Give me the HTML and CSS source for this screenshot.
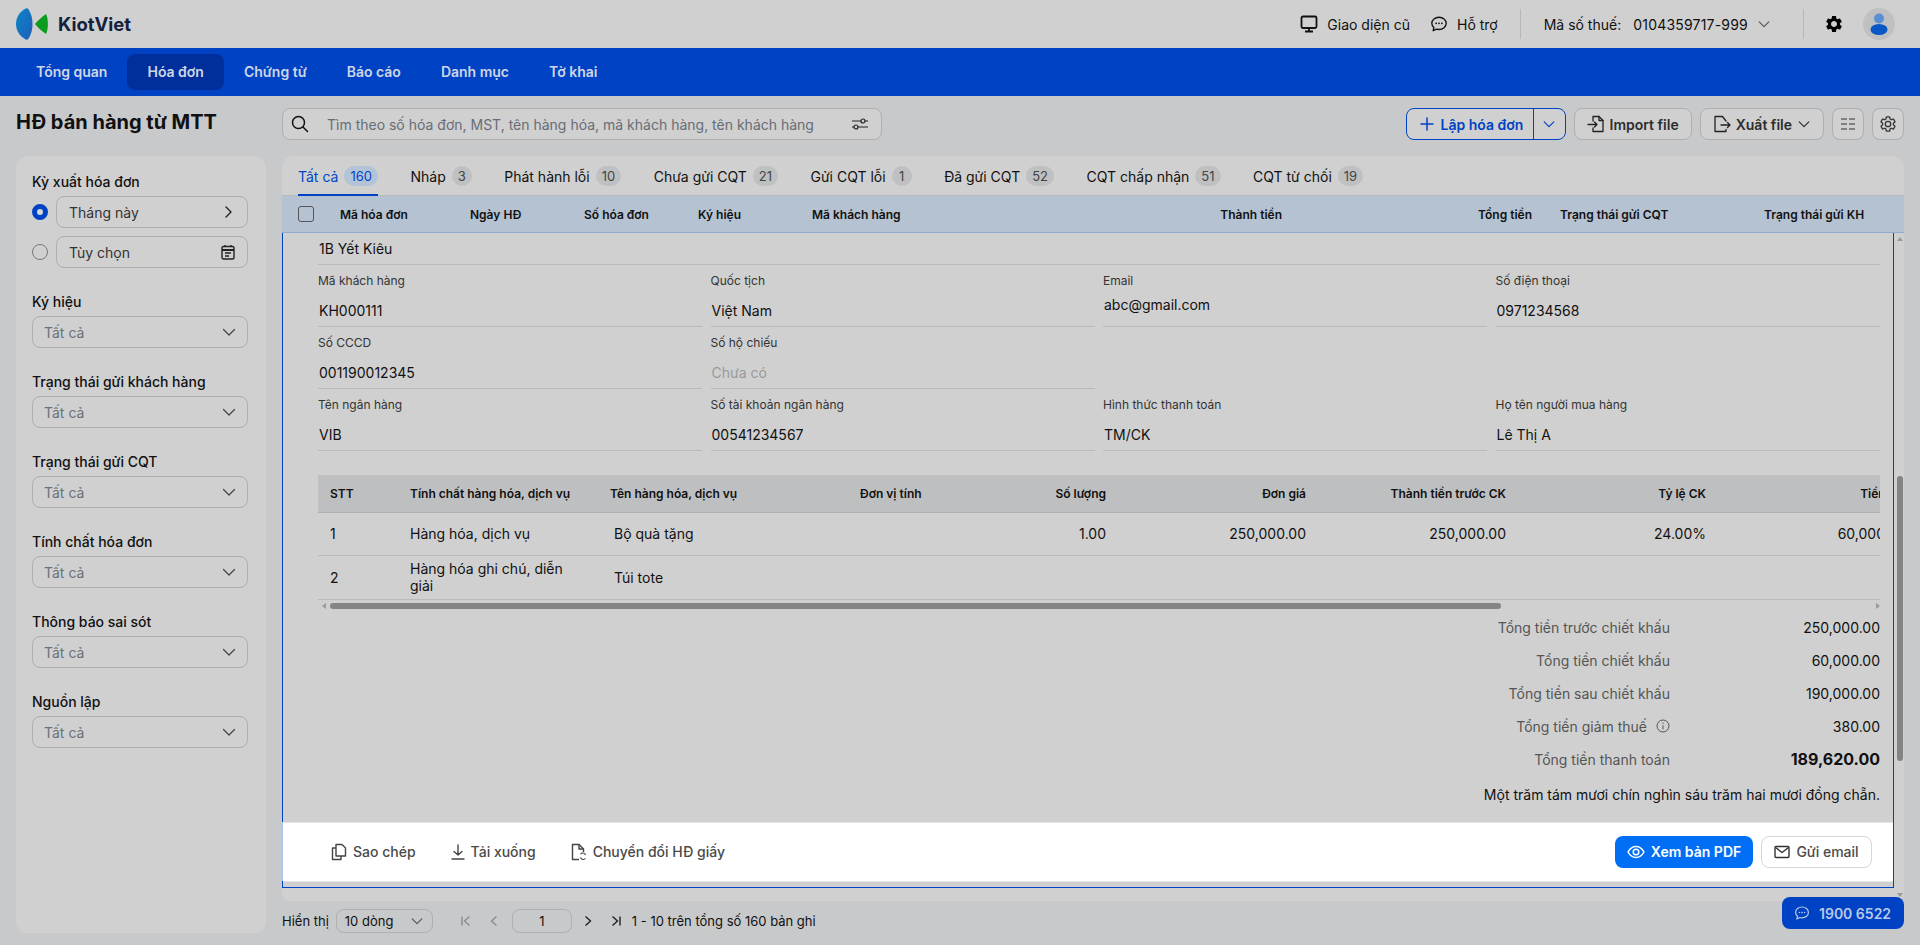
FILE: index.html
```html
<!DOCTYPE html>
<html lang="vi">
<head>
  <meta charset="UTF-8" />
  <title>HĐ bán hàng từ MTT</title>
  <link rel="stylesheet" href="styles.css">
</head>
<body>
  <svg class="sprite" width="0" height="0">
    <symbol id="chev-down" viewBox="0 0 16 16"><path d="M2.5 5.5 8 11l5.5-5.5" fill="none" stroke="currentColor" stroke-width="1.3" stroke-linecap="round" stroke-linejoin="round"/></symbol>
    <symbol id="chat" viewBox="0 0 20 20"><path d="M10 2.5c4.4 0 8 2.9 8 6.8s-3.6 6.8-8 6.8c-.9 0-1.8-.1-2.6-.4L3.5 17.5l.9-3.4C2.900 12.900 2 11.200 2 9.300 2 5.400 5.600 2.500 10 2.500z" fill="none" stroke="currentColor" stroke-width="1.5" stroke-linejoin="round"/><circle cx="6.8" cy="9.3" r="1" fill="currentColor"/><circle cx="10" cy="9.3" r="1" fill="currentColor"/><circle cx="13.2" cy="9.3" r="1" fill="currentColor"/></symbol>
    <symbol id="gear" viewBox="0 0 24 24"><path d="M19.140 12.940c.04-.3.06-.61.06-.94 0-.32-.02-.64-.07-.94l2.030-1.580c.18-.14.23-.41.12-.61l-1.920-3.320c-.12-.22-.37-.29-.59-.22l-2.390.96c-.5-.38-1.030-.7-1.620-.94l-.36-2.540c-.04-.24-.24-.41-.48-.41h-3.840c-.24 0-.43.17-.47.41l-.36 2.540c-.59.24-1.130.57-1.620.94l-2.390-.96c-.22-.08-.47 0-.59.22L2.740 8.870c-.12.21-.08.47.12.61l2.030 1.580c-.05.3-.09.63-.09.94s.02.64.07.94l-2.030 1.580c-.18.14-.23.41-.12.61l1.920 3.320c.12.22.37.29.59.22l2.390-.96c.5.38 1.030.7 1.620.94l.36 2.540c.05.24.24.41.48.41h3.840c.24 0 .44-.17.47-.41l.36-2.540c.59-.24 1.130-.56 1.620-.94l2.390.96c.22.08.47 0 .59-.22l1.920-3.320c.12-.22.07-.47-.12-.61l-2.010-1.580zM12 15.600c-1.980 0-3.600-1.620-3.600-3.600s1.620-3.600 3.600-3.600 3.600 1.620 3.600 3.600-1.620 3.600-3.600 3.600z"/></symbol>
  </svg>

  <header class="topbar">
    <div class="logo">
      <svg width="34" height="32" viewBox="0 0 34 32">
        <defs><linearGradient id="lens" x1="0" x2="1" y1="0" y2="1"><stop offset="0" stop-color="#0a86c8"/><stop offset="1" stop-color="#1f5fb8"/></linearGradient></defs>
        <path d="M11 0C4 3 0 9 0 16c0 7 4 13 11 16 3.500-3 5.500-9.500 5.500-16S14.500 3 11 0z" fill="url(#lens)"/>
        <path d="M30 6c-4 3-8 6-11 10 3 4 7 7 11 10 2.500-5 2.500-15 0-20z" fill="#0a9b1f"/>
      </svg>
      <span class="logo-text">KiotViet</span>
    </div>
    <div class="top-actions">
      <a class="top-link">
        <svg width="18" height="18" viewBox="0 0 18 18" fill="none" stroke="#111" stroke-width="1.8"><rect x="1.500" y="1.500" width="15" height="11.500" rx="1.500"/><path d="M9 13v3M5 16.500h8"/></svg>
        Giao diện cũ
      </a>
      <a class="top-link"><svg width="18" height="18"><use href="#chat"/></svg>Hỗ trợ</a>
      <span class="top-sep"></span>
      <div class="tax">
        <span>Mã số thuế:</span>
        <span class="tax-no">0104359717-999</span>
        <svg width="14" height="14" class="ic-grey"><use href="#chev-down"/></svg>
      </div>
      <span class="top-sep top-sep-2"></span>
      <svg class="top-gear" width="20" height="20"><use href="#gear"/></svg>
      <div class="avatar">
        <svg width="20" height="24" viewBox="0 0 20 24"><circle cx="10" cy="6.500" r="5" fill="#5a8fd4"/><ellipse cx="10" cy="17.500" rx="8.500" ry="5.500" fill="#0a58c6"/></svg>
      </div>
    </div>
  </header>

  <nav class="mainnav">
    <a>Tổng quan</a>
    <a class="active">Hóa đơn</a>
    <a>Chứng từ</a>
    <a>Báo cáo</a>
    <a>Danh mục</a>
    <a>Tờ khai</a>
  </nav>

  <main class="page">
    <h1>HĐ bán hàng từ MTT</h1>

    <div class="toolbar">
      <div class="search">
        <svg width="18" height="18" viewBox="0 0 18 18" fill="none" stroke="#111" stroke-width="1.5" stroke-linecap="round"><circle cx="7.500" cy="7.500" r="6"/><path d="m12 12 4.500 4.500"/></svg>
        <span class="search-ph">Tìm theo số hóa đơn, MST, tên hàng hóa, mã khách hàng, tên khách hàng</span>
        <svg width="18" height="16" viewBox="0 0 18 16" fill="none" stroke="#222" stroke-width="1.2"><path d="M1 5h9M14 5h3M1 11h2M7 11h10"/><circle cx="12" cy="5" r="2"/><circle cx="5" cy="11" r="2"/></svg>
      </div>
      <div class="tool-right">
        <div class="btn-split">
          <span class="split-main">
            <svg width="16" height="16" viewBox="0 0 16 16" stroke="currentColor" stroke-width="1.5" stroke-linecap="round"><path d="M8 2v12M2 8h12"/></svg>
            Lập hóa đơn
          </span>
          <span class="split-arrow"><svg width="14" height="14"><use href="#chev-down"/></svg></span>
        </div>
        <button class="btn">
          <svg width="18" height="18" viewBox="0 0 18 18" fill="none" stroke="#222" stroke-width="1.3" stroke-linejoin="round" stroke-linecap="round"><path d="M6 6V1.500h6l4 4v11H6V13"/><path d="M12 1.500v4h4M1 9.500h9M7.500 7l2.500 2.500L7.500 12"/></svg>
          Import file
        </button>
        <button class="btn">
          <svg width="18" height="18" viewBox="0 0 18 18" fill="none" stroke="#222" stroke-width="1.3" stroke-linejoin="round" stroke-linecap="round"><path d="M13 6 9.500 1.500H2v15h11v-2"/><path d="M8 10h9M14.500 7.500 17 10l-2.500 2.500"/></svg>
          Xuất file
          <svg width="14" height="14"><use href="#chev-down"/></svg>
        </button>
        <button class="btn btn-icon">
          <svg width="14" height="12" viewBox="0 0 14 12" stroke="#333" stroke-width="1.2"><path d="M0 1h6M8 1h6M0 6h6M8 6h6M0 11h6M8 11h6"/></svg>
        </button>
        <button class="btn btn-icon">
          <svg width="18" height="18" fill="none" stroke="#333" stroke-width="1.7"><use href="#gear"/></svg>
        </button>
      </div>
    </div>

    <aside class="sidebar">
      <div class="filter">
        <label>Kỳ xuất hóa đơn</label>
        <div class="radio-row">
          <span class="radio checked"></span>
          <div class="input">Tháng này
            <svg width="14" height="14" viewBox="0 0 14 14" fill="none" stroke="#222" stroke-width="1.4" stroke-linecap="round" stroke-linejoin="round"><path d="m5 2 5 5-5 5"/></svg>
          </div>
        </div>
        <div class="radio-row">
          <span class="radio"></span>
          <div class="input">Tùy chọn
            <svg width="14" height="16" viewBox="0 0 14 16" fill="none" stroke="#222" stroke-width="1.4"><rect x="1" y="2.500" width="12" height="12.500" rx="1.500"/><path d="M1 6h12" stroke-width="2"/><path d="M4 1v2M10 1v2M4 9h6M4 12h4"/></svg>
          </div>
        </div>
      </div>
      <div class="filter"><label>Ký hiệu</label><div class="input select">Tất cả<svg width="16" height="16"><use href="#chev-down"/></svg></div></div>
      <div class="filter"><label>Trạng thái gửi khách hàng</label><div class="input select">Tất cả<svg width="16" height="16"><use href="#chev-down"/></svg></div></div>
      <div class="filter"><label>Trạng thái gửi CQT</label><div class="input select">Tất cả<svg width="16" height="16"><use href="#chev-down"/></svg></div></div>
      <div class="filter"><label>Tính chất hóa đơn</label><div class="input select">Tất cả<svg width="16" height="16"><use href="#chev-down"/></svg></div></div>
      <div class="filter"><label>Thông báo sai sót</label><div class="input select">Tất cả<svg width="16" height="16"><use href="#chev-down"/></svg></div></div>
      <div class="filter"><label>Nguồn lập</label><div class="input select">Tất cả<svg width="16" height="16"><use href="#chev-down"/></svg></div></div>
    </aside>

    <section class="content">
      <div class="panel">
        <div class="tabs">
          <a class="tab active">Tất cả <span class="count">160</span></a>
          <a class="tab">Nháp <span class="count">3</span></a>
          <a class="tab">Phát hành lỗi <span class="count">10</span></a>
          <a class="tab">Chưa gửi CQT <span class="count">21</span></a>
          <a class="tab">Gửi CQT lỗi <span class="count">1</span></a>
          <a class="tab">Đã gửi CQT <span class="count">52</span></a>
          <a class="tab">CQT chấp nhận <span class="count">51</span></a>
          <a class="tab">CQT từ chối <span class="count">19</span></a>
        </div>

        <div class="list-head">
          <span class="check"></span>
          <span class="c-code">Mã hóa đơn</span>
          <span class="c-date">Ngày HĐ</span>
          <span class="c-no">Số hóa đơn</span>
          <span class="c-sign">Ký hiệu</span>
          <span class="c-cust">Mã khách hàng</span>
          <span class="c-amount">Thành tiền</span>
          <span class="c-total">Tổng tiền</span>
          <span class="c-cqt">Trạng thái gửi CQT</span>
          <span>Trạng thái gửi KH</span>
        </div>

        <div class="detail-wrap">
          <div class="detail">
            <div class="detail-body">
              <div class="address">1B Yết Kiêu</div>
              <div class="fields">
                <div class="field"><span class="f-label">Mã khách hàng</span><span class="f-value">KH000111</span></div>
                <div class="field"><span class="f-label">Quốc tịch</span><span class="f-value">Việt Nam</span></div>
                <div class="field"><span class="f-label">Email</span><span class="f-value f-high">abc@gmail.com</span></div>
                <div class="field"><span class="f-label">Số điện thoại</span><span class="f-value">0971234568</span></div>
                <div class="field"><span class="f-label">Số CCCD</span><span class="f-value">001190012345</span></div>
                <div class="field"><span class="f-label">Số hộ chiếu</span><span class="f-value f-empty">Chưa có</span></div>
                <div class="field no-line"></div>
                <div class="field no-line"></div>
                <div class="field"><span class="f-label">Tên ngân hàng</span><span class="f-value">VIB</span></div>
                <div class="field"><span class="f-label">Số tài khoản ngân hàng</span><span class="f-value">00541234567</span></div>
                <div class="field"><span class="f-label">Hình thức thanh toán</span><span class="f-value">TM/CK</span></div>
                <div class="field"><span class="f-label">Họ tên người mua hàng</span><span class="f-value">Lê Thị A</span></div>
              </div>

              <div class="items-wrap">
                <table class="items">
                  <colgroup>
                    <col class="w-stt"><col class="w-kind"><col class="w-name"><col class="w-unit">
                    <col class="w-qty"><col class="w-num"><col class="w-num"><col class="w-num"><col class="w-num">
                  </colgroup>
                  <thead>
                    <tr>
                      <th class="first">STT</th><th>Tính chất hàng hóa, dịch vụ</th><th>Tên hàng hóa, dịch vụ</th><th>Đơn vị tính</th>
                      <th class="num">Số lượng</th><th class="num">Đơn giá</th><th class="num">Thành tiền trước CK</th><th class="num">Tỷ lệ CK</th><th class="num">Tiền CK</th>
                    </tr>
                  </thead>
                  <tbody>
                    <tr class="row-a">
                      <td class="first">1</td><td>Hàng hóa, dịch vụ</td><td class="name">Bộ quà tặng</td><td></td>
                      <td class="num">1.00</td><td class="num">250,000.00</td><td class="num">250,000.00</td><td class="num">24.00%</td><td class="num">60,000.00</td>
                    </tr>
                    <tr>
                      <td class="first">2</td><td class="wrap">Hàng hóa ghi chú, diễn giải</td><td class="name">Túi tote</td><td></td>
                      <td></td><td></td><td></td><td></td><td></td>
                    </tr>
                  </tbody>
                </table>
              </div>
              <div class="hscroll">
                <span class="arrow-l"></span>
                <span class="hthumb"></span>
                <span class="arrow-r"></span>
              </div>

              <div class="sum-row"><span class="s-label">Tổng tiền trước chiết khấu</span><span class="s-value">250,000.00</span></div>
              <div class="sum-row"><span class="s-label">Tổng tiền chiết khấu</span><span class="s-value">60,000.00</span></div>
              <div class="sum-row"><span class="s-label">Tổng tiền sau chiết khấu</span><span class="s-value">190,000.00</span></div>
              <div class="sum-row">
                <span class="s-label">Tổng tiền giảm thuế
                  <svg width="14" height="14" viewBox="0 0 14 14" fill="none" stroke="#555" stroke-width="1"><circle cx="7" cy="7" r="6"/><path d="M7 6.300v4M7 3.600v1.200"/></svg>
                </span>
                <span class="s-value">380.00</span>
              </div>
              <div class="sum-row"><span class="s-label">Tổng tiền thanh toán</span><span class="s-value s-total">189,620.00</span></div>
              <div class="in-words">Một trăm tám mươi chín nghìn sáu trăm hai mươi đồng chẵn.</div>
            </div>

            <div class="actions">
              <a class="act">
                <svg width="16" height="18" viewBox="0 0 16 18" fill="none" stroke="#444" stroke-width="1.4" stroke-linejoin="round"><path d="M5 13V1.500h6l3.500 3.500v8z"/><path d="M5 5H1.500v11.500H10V13"/></svg>
                Sao chép
              </a>
              <a class="act">
                <svg width="14" height="16" viewBox="0 0 14 16" fill="none" stroke="#444" stroke-width="1.4" stroke-linecap="round" stroke-linejoin="round"><path d="M7 1v10M3 7.500 7 11l4-3.500M1 15h12"/></svg>
                Tải xuống
              </a>
              <a class="act">
                <svg width="16" height="18" viewBox="0 0 16 18" fill="none" stroke="#444" stroke-width="1.4" stroke-linejoin="round"><path d="M8 16.500H1.500v-15H8l4.500 4.500v3"/><path d="M8 1.500V6h4.500"/><path d="M14.500 12a2.800 2.800 0 0 0-5-.8M9.500 14.500a2.800 2.800 0 0 0 5 .8" stroke-width="1.1"/></svg>
                Chuyển đổi HĐ giấy
              </a>
              <span class="act-space"></span>
              <button class="btn-primary">
                <svg width="18" height="18" viewBox="0 0 18 18" fill="none" stroke="#fff" stroke-width="1.5"><path d="M1 9c2-3.600 4.800-5.500 8-5.500S15 5.400 17 9c-2 3.600-4.800 5.500-8 5.500S3 12.600 1 9z"/><circle cx="9" cy="9" r="2.800"/></svg>
                Xem bản PDF
              </button>
              <button class="btn-outline">
                <svg width="16" height="14" viewBox="0 0 16 14" fill="none" stroke="#333" stroke-width="1.4" stroke-linejoin="round"><rect x="1" y="1.500" width="14" height="11" rx="1"/><path d="m1.500 2.500 6.500 5 6.500-5"/></svg>
                Gửi email
              </button>
            </div>
            <div class="detail-foot"></div>
          </div>
          <div class="vscroll">
            <span class="arrow-u"></span>
            <span class="vthumb"></span>
            <span class="arrow-d"></span>
          </div>
        </div>
      </div>

      <div class="pager">
        <span>Hiển thị</span>
        <div class="page-size">10 dòng<svg width="14" height="14" class="ic-grey"><use href="#chev-down"/></svg></div>
        <div class="page-nav">
          <svg class="muted" width="12" height="12" viewBox="0 0 12 12" fill="none" stroke="currentColor" stroke-width="1.4"><path d="M2 1.500v9M9.500 1.500 4.500 6l5 4.500"/></svg>
          <svg class="muted" width="12" height="12" viewBox="0 0 12 12" fill="none" stroke="currentColor" stroke-width="1.4"><path d="M8.500 1.500 3.500 6l5 4.500"/></svg>
          <div class="page-no">1</div>
          <svg width="12" height="12" viewBox="0 0 12 12" fill="none" stroke="#222" stroke-width="1.4"><path d="m3.500 1.500 5 4.500-5 4.500"/></svg>
          <svg class="page-last" width="12" height="12" viewBox="0 0 12 12" fill="none" stroke="#222" stroke-width="1.4"><path d="M10 1.500v9M2.500 1.500l5 4.500-5 4.500"/></svg>
        </div>
        <span class="page-info">1 - 10 trên tổng số 160 bản ghi</span>
      </div>
    </section>
  </main>

  <a class="hotline"><svg width="16" height="16"><use href="#chat"/></svg>1900 6522</a>
</body>
</html>
```

FILE: styles.css
```css
* {
  box-sizing: border-box;
}
body {
  margin: 0;
  height: 945px;
  overflow: hidden;
  background: #c8c9cb;
  color: #111;
  font-family: Inter, "Noto Sans", sans-serif;
  font-size: 14px;
}
.sprite {
  display: block;
  height: 0;
}
svg {
  flex: none;
}

/* top bar */
.topbar {
  height: 48px;
  background: #d0d0d0;
  display: flex;
  align-items: center;
  justify-content: space-between;
  padding: 0 25px 0 16px;
}
.logo {
  display: flex;
  align-items: center;
  gap: 8px;
}
.logo-text {
  font-size: 18.5px;
  font-weight: 700;
  color: #14213d;
}
.top-actions {
  display: flex;
  align-items: center;
}
.top-link {
  display: flex;
  align-items: center;
  gap: 9px;
  margin-right: 20px;
}
.top-sep {
  width: 1px;
  height: 30px;
  background: #b6b7b8;
  margin: 0 23px 0 2px;
}
.top-sep-2 {
  margin: 0 20px 0 32px;
}
.tax {
  display: flex;
  align-items: center;
  gap: 9px;
}
.tax-no {
  margin-left: 3px;
  letter-spacing: .2px;
}
.ic-grey {
  color: #555;
}
.top-gear {
  fill: #000;
  margin-right: 19px;
}
.avatar {
  width: 32px;
  height: 32px;
  border-radius: 50%;
  background: #bfc0c2;
  display: flex;
  align-items: center;
  justify-content: center;
}

/* main nav */
.mainnav {
  height: 48px;
  background: #0042c4;
  padding: 6px 16px;
  display: flex;
}
.mainnav a {
  padding: 0 20px;
  line-height: 36px;
  font-weight: 600;
  color: #cfd6e6;
  border-radius: 8px;
}
.mainnav a.active {
  background: #002f9c;
}

/* page grid */
.page {
  display: grid;
  grid-template-columns: 250px 1622px;
  grid-template-rows: 60px 777px;
  column-gap: 16px;
  padding: 0 16px;
}
h1 {
  margin: 0;
  padding-top: 12px;
  font-size: 20px;
  line-height: 28px;
  font-weight: 700;
  white-space: nowrap;
}
.toolbar {
  padding-top: 12px;
  display: flex;
  justify-content: space-between;
  align-items: flex-start;
}
.search {
  width: 600px;
  height: 32px;
  background: #d0d0d0;
  border: 1px solid #aeafb1;
  border-radius: 8px;
  padding: 0 12px 0 8px;
  display: flex;
  align-items: center;
}
.search-ph {
  flex: 1;
  margin-left: 18px;
  color: #676d76;
}
.tool-right {
  display: flex;
  gap: 8px;
}
.btn-split {
  width: 160px;
  height: 32px;
  border: 1px solid #0042c4;
  border-radius: 8px;
  background: #d0d0d0;
  color: #0042c4;
  font-weight: 600;
  display: flex;
}
.split-main {
  flex: 1;
  display: flex;
  align-items: center;
  gap: 6px;
  padding-left: 12px;
  border-right: 1px solid #0042c4;
}
.split-arrow {
  width: 31px;
  display: flex;
  align-items: center;
  justify-content: center;
}
.btn {
  height: 32px;
  padding: 0 12px;
  background: #d0d0d0;
  border: 1px solid #aeafb1;
  border-radius: 8px;
  font: 600 14px Inter, sans-serif;
  color: #2d2d2d;
  display: flex;
  align-items: center;
  gap: 5px;
}
.btn-icon {
  width: 32px;
  padding: 0;
  justify-content: center;
}

/* filter sidebar */
.sidebar {
  background: #d0d0d0;
  border-radius: 12px;
  padding: 16px 18px 16px 16px;
}
.filter {
  margin-bottom: 24px;
}
.filter label {
  display: block;
  line-height: 20px;
  margin-bottom: 4px;
  font-weight: 500;
}
.radio-row {
  display: flex;
  align-items: center;
  gap: 8px;
  margin-bottom: 8px;
}
.radio-row:last-child {
  margin-bottom: 0;
}
.radio {
  width: 16px;
  height: 16px;
  border-radius: 50%;
  border: 1px solid #777;
  flex: none;
}
.radio.checked {
  border: 5px solid #0042c4;
  background: #d8d8d8;
}
.input {
  flex: 1;
  height: 32px;
  border: 1px solid #aeafb1;
  border-radius: 8px;
  padding: 0 12px;
  display: flex;
  align-items: center;
  justify-content: space-between;
  color: #333;
}
.input.select {
  color: #6b7079;
  padding: 0 10px 0 11px;
}
.input.select svg {
  color: #444;
}

/* list panel */
.content {
  display: flex;
  flex-direction: column;
}
.panel {
  height: 745px;
  background: #d0d0d0;
  border-radius: 12px 12px 8px 8px;
  overflow: hidden;
}
.tabs {
  height: 40px;
  display: flex;
  gap: 32.5px;
  padding-left: 16px;
  border-bottom: 1px solid #b9babc;
}
.tab {
  height: 40px;
  display: flex;
  align-items: center;
  gap: 6px;
}
.tab.active {
  color: #0047c8;
  border-bottom: 2px solid #0042c4;
  padding-top: 2px;
}
.count {
  min-width: 20px;
  height: 20px;
  border-radius: 10px;
  padding: 0 6px;
  background: #bfc0c2;
  color: #444;
  font-size: 13px;
  line-height: 20px;
  text-align: center;
}
.tab.active .count {
  background: #b3c3d8;
  color: #0047c8;
}
.list-head {
  height: 37px;
  background: #b4c2d2;
  border-bottom: 1px solid #8facd0;
  padding-left: 16px;
  display: flex;
  align-items: center;
  font-size: 12px;
  font-weight: 600;
  white-space: nowrap;
}
.check {
  width: 16px;
  height: 16px;
  border: 1px solid #555;
  border-radius: 3px;
  margin-right: 26px;
}
.c-code { width: 130px; }
.c-date, .c-no, .c-sign { width: 114px; }
.c-cust { width: 200px; }
.c-amount { width: 270px; text-align: right; }
.c-total { width: 250px; text-align: right; }
.c-cqt { width: 204px; margin-left: 28px; }

/* invoice detail */
.detail-wrap {
  display: flex;
  align-items: flex-start;
}
.detail {
  width: 1612px;
  height: 655px;
  border: 1px solid #0042c4;
  border-top: 0;
  display: flex;
  flex-direction: column;
}
.detail-body {
  height: 589px;
  padding: 0 13px 0 35px;
  overflow: hidden;
}
.address {
  height: 32px;
  line-height: 32px;
  padding-left: 1px;
  border-bottom: 1px solid #b9babc;
}
.fields {
  display: grid;
  grid-template-columns: repeat(4, 384px);
  column-gap: 8.5px;
}
.field {
  height: 62px;
  padding-top: 7px;
  border-bottom: 1px solid #b9babc;
}
.field.no-line {
  border-bottom: 0;
}
.f-label {
  display: block;
  font-size: 12px;
  line-height: 18px;
  color: #333;
}
.f-value {
  display: block;
  line-height: 24px;
  padding: 9px 0 0 1px;
}
.f-high {
  padding-top: 3px;
}
.f-empty {
  color: #999;
}
.items-wrap {
  margin-top: 24px;
  overflow: hidden;
}
.items {
  width: 1600px;
  table-layout: fixed;
  border-collapse: collapse;
}
.w-stt { width: 92px; }
.w-kind { width: 200px; }
.w-name { width: 250px; }
.w-unit { width: 100px; }
.w-qty { width: 158px; }
.w-num { width: 200px; }
.items th {
  height: 37px;
  padding: 0;
  background: #bebfc1;
  border-bottom: 1px solid #b0b1b3;
  font-size: 12px;
  font-weight: 600;
  text-align: left;
  white-space: nowrap;
}
.items td {
  height: 44px;
  padding: 0;
  border-bottom: 1px solid #b9babc;
  line-height: 17px;
}
.items .row-a td {
  height: 43px;
}
.items .first {
  padding-left: 12px;
}
.items .num {
  text-align: right;
  padding-right: 12px;
}
.items .name {
  padding-left: 4px;
}
.items .wrap {
  padding-right: 24px;
}
.hscroll {
  height: 9px;
  display: flex;
  align-items: flex-end;
  padding: 0 0 0 4px;
}
.hthumb {
  width: 1171px;
  height: 6px;
  margin-left: 4px;
  border-radius: 3px;
  background: #848486;
}
.arrow-l, .arrow-r, .arrow-u, .arrow-d {
  width: 0;
  height: 0;
  border: 3px solid transparent;
}
.arrow-l {
  border-right: 4px solid #9a9a9c;
  border-left: 0;
}
.arrow-r {
  border-left: 4px solid #9a9a9c;
  border-right: 0;
  margin-left: auto;
}
.sum-row {
  height: 33px;
  display: flex;
  justify-content: flex-end;
  align-items: center;
}
.hscroll + .sum-row {
  margin-top: 2px;
}
.s-label {
  color: #555;
  display: flex;
  align-items: center;
  gap: 9px;
}
.s-value {
  width: 210px;
  text-align: right;
}
.s-total {
  font-size: 16px;
  font-weight: 700;
}
.in-words {
  margin-top: 7px;
  line-height: 24px;
  text-align: right;
}
.actions {
  height: 59px;
  margin-left: -1px;
  background: #fff;
  border-left: 1px solid #a9c1ea;
  border-top: 1px solid #e4e4e4;
  display: flex;
  align-items: center;
  padding: 0 21px 1px 48px;
}
.act {
  display: flex;
  align-items: center;
  gap: 6px;
  margin-right: 35px;
  font-weight: 500;
  color: #4a4a4a;
  white-space: nowrap;
}
.act-space {
  flex: 1;
}
.btn-primary, .btn-outline {
  height: 32px;
  border-radius: 8px;
  font: 600 14px Inter, sans-serif;
  display: flex;
  align-items: center;
  justify-content: center;
  gap: 6px;
}
.btn-primary {
  width: 138px;
  background: #006ff5;
  color: #fff;
  border: 0;
  margin-right: 8px;
}
.btn-outline {
  width: 111px;
  background: #fff;
  color: #4a4a4a;
  border: 1px solid #d6d6d6;
  font-weight: 500;
}
.detail-foot {
  flex: 1;
  border-top: 1px solid #e4e4e4;
}
.vscroll {
  width: 10px;
  height: 668px;
  padding-left: 1px;
  display: flex;
  flex-direction: column;
  align-items: center;
}
.arrow-u {
  border-bottom: 4px solid #9a9a9c;
  border-top: 0;
  margin-top: 4px;
}
.vthumb {
  width: 6px;
  height: 285px;
  margin-top: 235px;
  border-radius: 3px;
  background: #848486;
}
.arrow-d {
  border-top: 4px solid #9a9a9c;
  border-bottom: 0;
  margin-top: auto;
  margin-bottom: 4px;
}

/* pager */
.pager {
  margin-top: 8px;
  height: 24px;
  display: flex;
  align-items: center;
  font-size: 13px;
}
.page-size {
  width: 97px;
  height: 24px;
  margin-left: 7px;
  padding: 0 8px;
  border: 1px solid #aeafb1;
  border-radius: 8px;
  display: flex;
  align-items: center;
  justify-content: space-between;
}
.page-nav {
  margin-left: 27px;
  display: flex;
  align-items: center;
  gap: 10px;
}
.muted {
  color: #8b8c8e;
  margin-right: 6px;
}
.page-nav svg + .page-no {
  margin-left: -4px;
}
.page-no {
  width: 60px;
  height: 24px;
  border: 1px solid #aeafb1;
  border-radius: 8px;
  line-height: 22px;
  text-align: center;
}
.page-last {
  margin-left: 6px;
}
.page-info {
  margin-left: 10px;
}

/* floating hotline */
.hotline {
  position: fixed;
  left: 1782px;
  top: 897px;
  width: 122px;
  height: 32px;
  border-radius: 8px;
  background: #0042c4;
  color: #b9c9e6;
  font-weight: 600;
  display: flex;
  align-items: center;
  gap: 9px;
  padding-left: 12px;
}
```
